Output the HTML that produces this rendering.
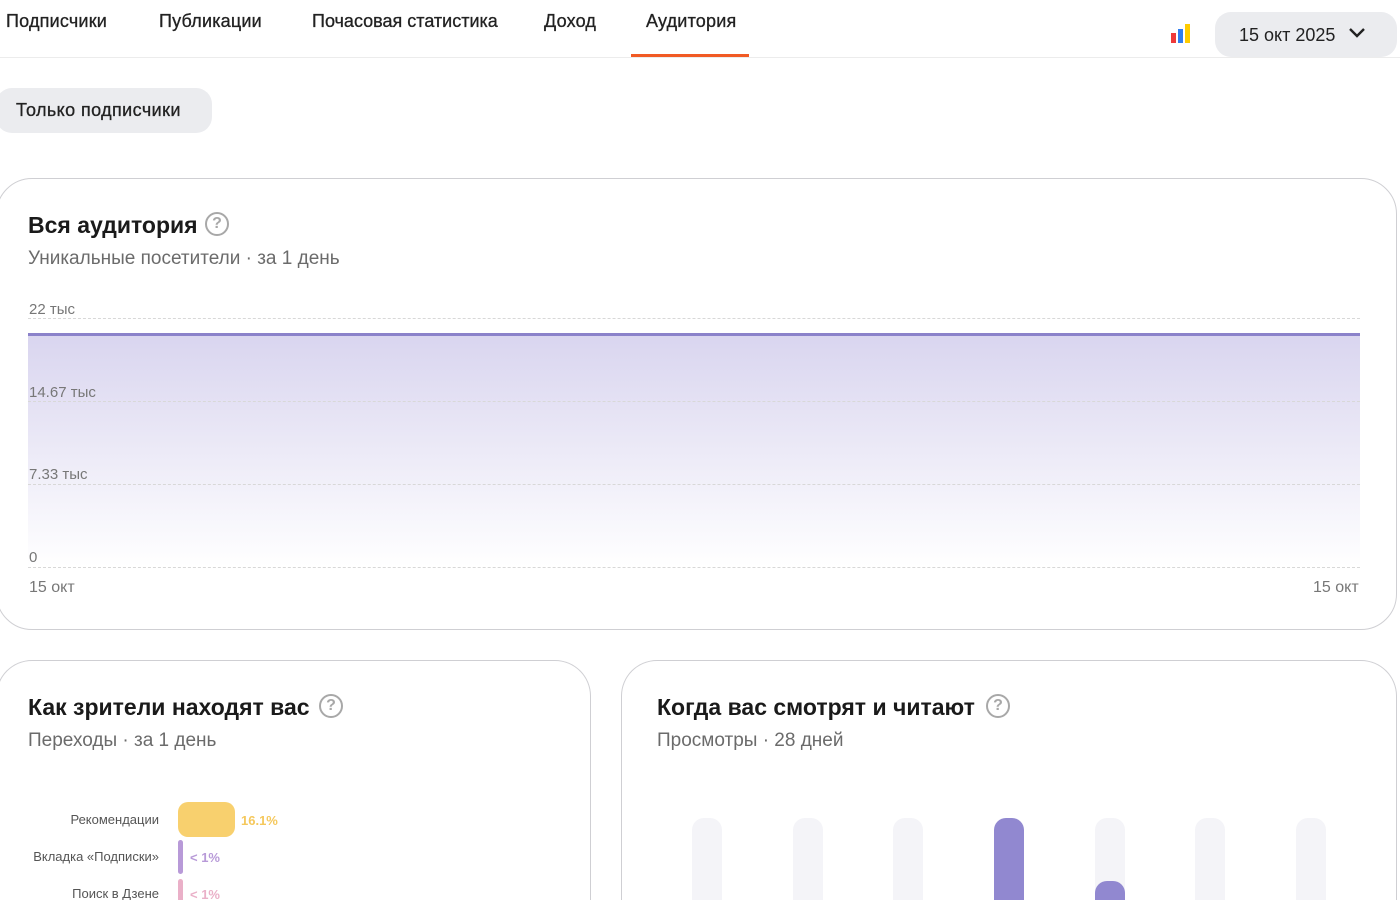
<!DOCTYPE html>
<html style="overflow:hidden;height:900px"><head><meta charset="utf-8"><style>
*{box-sizing:border-box;margin:0;padding:0}
body{width:1400px;height:900px;overflow:hidden;background:#fff;font-family:"Liberation Sans","DejaVu Sans",sans-serif;color:#222;position:relative}
.a{position:absolute}
.tab{position:absolute;top:11px;font-size:18px;letter-spacing:0.2px;color:#222;white-space:nowrap;-webkit-text-stroke:0.3px #222}
.card{position:absolute;border:1px solid #cfcfd3;border-radius:36px;background:#fff}
.cb{border-bottom:none;border-radius:36px 36px 0 0;height:240px}
.h{position:absolute;font-size:23px;font-weight:bold;color:#1a1a1a;white-space:nowrap}
.sub{position:absolute;font-size:19px;color:#6b6b6b;white-space:nowrap}
.q{position:absolute;width:24px;height:24px;border:2px solid #a8a8a8;border-radius:50%;color:#a8a8a8;font-size:16px;font-weight:bold;text-align:center;line-height:20px}
.gl{position:absolute;left:28px;width:1332px;border-top:1px dashed #d8d8d8}
.yl{position:absolute;left:29px;font-size:14px;color:#777}
.bar{position:absolute;top:818px;width:30px;height:82px;border-radius:12px 12px 0 0;background:#f4f4f8}
.lbl{position:absolute;right:1241px;font-size:13px;color:#555;white-space:nowrap}
</style></head><body>
<div class="tab" style="left:6px">Подписчики</div>
<div class="tab" style="left:159px">Публикации</div>
<div class="tab" style="left:312px;letter-spacing:0">Почасовая статистика</div>
<div class="tab" style="left:544px">Доход</div>
<div class="tab" style="left:646px">Аудитория</div>
<div class="a" style="left:631px;top:54px;width:118px;height:4px;background:#f15a24"></div>
<div class="a" style="left:0;top:57px;width:1400px;height:1px;background:#ececec"></div>
<div class="a" style="left:1171px;top:33px;width:5px;height:10px;background:#ee3a3a"></div>
<div class="a" style="left:1178px;top:29px;width:5px;height:14px;background:#2f7df0"></div>
<div class="a" style="left:1185px;top:24px;width:5px;height:19px;background:#ffcc00"></div>
<div class="a" style="left:1215px;top:12px;width:182px;height:45px;border-radius:16px;background:#ebecef"></div>
<div class="a" style="left:1239px;top:25px;font-size:18px;color:#222">15 окт 2025</div>
<svg class="a" style="left:1348px;top:27px" width="18" height="12"><path d="M2 2l7 7 7-7" fill="none" stroke="#222" stroke-width="2.4"/></svg>
<div class="a" style="left:-4px;top:88px;width:216px;height:45px;border-radius:16px;background:#ebecef"></div>
<div class="a" style="left:16px;top:100px;font-size:18px;letter-spacing:0.4px;color:#222;-webkit-text-stroke:0.3px #222">Только подписчики</div>

<div class="card" style="left:-4px;top:178px;width:1401px;height:452px"></div>
<div class="h" style="left:28px;top:212px">Вся аудитория</div>
<div class="q" style="left:205px;top:212px">?</div>
<div class="sub" style="left:28px;top:248px">Уникальные посетители · за 1 день</div>
<div class="a" style="left:28px;top:335px;width:1332px;height:232px;background:linear-gradient(#d9d5ef,#fff)"></div>
<div class="a" style="left:28px;top:333px;width:1332px;height:3px;background:#8b82ca"></div>
<div class="gl" style="top:318px"></div><div class="gl" style="top:401px"></div><div class="gl" style="top:484px"></div><div class="gl" style="top:567px"></div>
<div class="yl" style="top:301px;font-size:15px">22 тыс</div>
<div class="yl" style="top:384px;font-size:15px">14.67 тыс</div>
<div class="yl" style="top:466px;font-size:15px">7.33 тыс</div>
<div class="yl" style="top:549px;font-size:15px">0</div>
<div class="yl" style="top:579px;font-size:16px">15 окт</div>
<div class="yl" style="top:579px;left:1313px;font-size:16px">15 окт</div>

<div class="card cb" style="left:-4px;top:660px;width:595px"></div>
<div class="h" style="left:28px;top:694px">Как зрители находят вас</div>
<div class="q" style="left:319px;top:694px">?</div>
<div class="sub" style="left:28px;top:730px">Переходы · за 1 день</div>
<div class="lbl" style="top:812px">Рекомендации</div>
<div class="a" style="left:178px;top:802px;width:57px;height:35px;border-radius:10px;background:#f8d06e"></div>
<div class="a" style="left:241px;top:813px;font-size:13px;font-weight:bold;color:#f5c85c">16.1%</div>
<div class="lbl" style="top:849px">Вкладка «Подписки»</div>
<div class="a" style="left:178px;top:840px;width:5px;height:34px;border-radius:3px;background:#b89ad8"></div>
<div class="a" style="left:190px;top:850px;font-size:13px;font-weight:bold;color:#b89ad8">&lt; 1%</div>
<div class="lbl" style="top:886px">Поиск в Дзене</div>
<div class="a" style="left:178px;top:879px;width:5px;height:21px;border-radius:3px 3px 0 0;background:#eab0c8"></div>
<div class="a" style="left:190px;top:887px;font-size:13px;font-weight:bold;color:#eab0c8">&lt; 1%</div>

<div class="card cb" style="left:621px;top:660px;width:776px"></div>
<div class="h" style="left:657px;top:694px">Когда вас смотрят и читают</div>
<div class="q" style="left:986px;top:694px">?</div>
<div class="sub" style="left:657px;top:730px">Просмотры · 28 дней</div>
<div class="bar" style="left:692px"></div>
<div class="bar" style="left:793px"></div>
<div class="bar" style="left:893px"></div>
<div class="bar" style="left:994px;background:#9188d0"></div>
<div class="bar" style="left:1095px"></div>
<div class="bar" style="left:1095px;top:881px;height:19px;background:#9188d0"></div>
<div class="bar" style="left:1195px"></div>
<div class="bar" style="left:1296px"></div>
</body></html>
